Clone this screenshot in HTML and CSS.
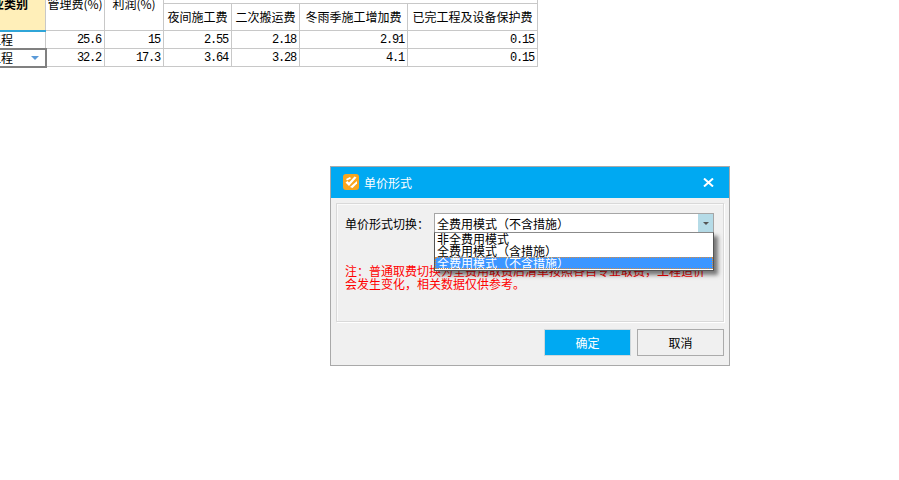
FILE: index.html
```html
<!DOCTYPE html>
<html lang="zh-CN">
  <head>
    <meta charset="UTF-8" />
    <meta name="viewport" content="width=device-width, initial-scale=1.0" />
    <title>单价形式</title>
    <link rel="stylesheet" href="styles.css">
  </head>
  <body>
    <!-- Fee table, scrolled so its top and left edges are cut off -->
    <table class="fee-table">
      <colgroup>
        <col class="col-type" />
        <col class="col-59" />
        <col class="col-59" />
        <col class="col-68" />
        <col class="col-68" />
        <col class="col-108" />
        <col class="col-130" />
      </colgroup>
      <thead>
        <tr class="head-group">
          <th rowspan="2" class="head-type">取费专业类别</th>
          <th rowspan="2" class="head-tall">管理费(%)</th>
          <th rowspan="2" class="head-tall">利润(%)</th>
          <th colspan="4"></th>
        </tr>
        <tr class="head-sub">
          <th>夜间施工费</th>
          <th>二次搬运费</th>
          <th>冬雨季施工增加费</th>
          <th>已完工程及设备保护费</th>
        </tr>
      </thead>
      <tbody>
        <tr>
          <td class="cell-type">建筑工程</td>
          <td class="num">25.6</td>
          <td class="num">15</td>
          <td class="num">2.55</td>
          <td class="num">2.18</td>
          <td class="num">2.91</td>
          <td class="num">0.15</td>
        </tr>
        <tr>
          <td class="cell-type cell-active">安装工程<span class="cell-arrow"></span></td>
          <td class="num">32.2</td>
          <td class="num">17.3</td>
          <td class="num">3.64</td>
          <td class="num">3.28</td>
          <td class="num">4.1</td>
          <td class="num">0.15</td>
        </tr>
      </tbody>
    </table>

    <div class="dialog">
      <div class="dialog-title">
        <svg class="app-icon" width="16" height="16" viewBox="0 0 16 16">
          <rect width="16" height="16" rx="3" fill="#f9a61c" />
          <path d="M2.500 8.500 6 12 13.500 3.500 11.500 2.500 6 8.500 4.500 7Z" fill="#fff" />
          <path d="M7 13 14 7 14 9.500 9.500 14Z" fill="#fff" />
          <path d="M3 5 7 3 8 4.500 4 6.500Z" fill="#fff" />
        </svg>
        <span class="dialog-name">单价形式</span>
        <svg class="close-icon" width="11" height="9" viewBox="0 0 11 9">
          <path d="M1 0.500 10 8.500M10 0.500 1 8.500" stroke="#fff" stroke-width="2" fill="none" />
        </svg>
      </div>

      <div class="dialog-body">
        <div class="group-box">
          <div class="form-row">
            <label class="form-label">单价形式切换：</label>
            <div class="combo">
              <span class="combo-value">全费用模式（不含措施）</span>
              <span class="combo-btn"><span class="combo-arrow"></span></span>
              <ul class="combo-list">
                <li>非全费用模式</li>
                <li>全费用模式（含措施）</li>
                <li class="selected">全费用模式（不含措施）</li>
              </ul>
            </div>
          </div>
          <p class="note">注：普通取费切换为全费用取费后清单按照各自专业取费，工程造价会发生变化，相关数据仅供参考。</p>
        </div>

        <div class="dialog-buttons">
          <button class="btn btn-primary">确定</button>
          <button class="btn">取消</button>
        </div>
      </div>
    </div>
  </body>
</html>
```

FILE: styles.css
```css
html,
body {
  margin: 0;
  height: 100%;
  overflow: hidden;
  background: #fff;
}
body {
  position: relative;
  font-family: "Noto Sans CJK SC", "Liberation Sans", sans-serif;
  font-size: 12px;
  color: #000;
}

/* table */
.fee-table {
  border-collapse: collapse;
  table-layout: fixed;
  width: 597px;
  margin: -21px 0 0 -60px;
}
.col-type { width: 105px; }
.col-59 { width: 59px; }
.col-68 { width: 68px; }
.col-108 { width: 108px; }
.col-130 { width: 130px; }
.fee-table th,
.fee-table td {
  border: 1px solid #c8c8c8;
  padding: 0;
  overflow: hidden;
  white-space: nowrap;
  font-weight: normal;
  line-height: 14px;
}
.head-group th {
  height: 23px;
}
.head-sub th {
  height: 26px;
}
.fee-table .head-tall {
  padding-bottom: 2px;
}
.fee-table .head-type {
  background: #ffefb9;
  border-bottom: 2px solid #2fa5d8;
  font-weight: bold;
  text-align: right;
  padding: 0 17px 2px 0;
}
.fee-table td {
  height: 18px;
  box-sizing: border-box;
}
.fee-table .cell-type {
  position: relative;
  text-align: left;
  padding-left: 24px;
}
.fee-table .cell-active {
  outline: 2px solid #808080;
  outline-offset: -1px;
}
.cell-arrow {
  position: absolute;
  right: 6px;
  top: 7px;
  border-left: 4px solid transparent;
  border-right: 4px solid transparent;
  border-top: 4px solid #5a9ad8;
}
.fee-table .num {
  text-align: right;
  padding-right: 3px;
  font-family: "Liberation Mono", monospace;
  font-size: 12px;
  letter-spacing: -1.2px;
}

/* dialog */
.dialog {
  position: absolute;
  left: 330px;
  top: 166px;
  width: 398px;
  height: 198px;
  display: flex;
  flex-direction: column;
  background: #f0f0f0;
  border: 1px solid #a9a9a9;
}
.dialog-title {
  display: flex;
  align-items: center;
  height: 31px;
  flex: none;
  box-sizing: border-box;
  background: #00a9f2;
  color: #fff;
  padding: 0 15px 1px 12px;
}
.app-icon {
  flex: none;
}
.dialog-name {
  margin-left: 5px;
  flex: 1;
}
.dialog-body {
  flex: 1;
  display: flex;
  flex-direction: column;
  padding: 5px 5px 8px 5px;
}
.group-box {
  height: 119px;
  box-sizing: border-box;
  border: 1px solid #d9d9d9;
  box-shadow: inset 1px 1px 0 #fafafa, 1px 1px 0 #fff;
  padding: 9px 9px 0 8px;
}
.form-row {
  display: flex;
  align-items: center;
}
.form-label {
  width: 89px;
  flex: none;
}
.combo {
  position: relative;
  flex: 1;
  height: 20px;
  display: flex;
  align-items: center;
  box-sizing: border-box;
  background: #fff;
  border: 1px solid #a6a6a6;
  padding-left: 2px;
}
.combo-value {
  flex: 1;
}
.combo-btn {
  width: 15px;
  height: 18px;
  display: flex;
  align-items: center;
  justify-content: center;
  background: #b5dbe7;
}
.combo-arrow {
  border-left: 3px solid transparent;
  border-right: 3px solid transparent;
  border-top: 3px solid #555;
}
.combo-list {
  position: absolute;
  left: -1px;
  right: -1px;
  top: 18px;
  height: 37px;
  margin: 0;
  padding: 0;
  list-style: none;
  background: #fff;
  border: 1px solid #555;
  border-top-color: #8a8a8a;
  box-shadow: 4px 4px 4px rgba(0, 0, 0, 0.5);
  box-sizing: content-box;
}
.combo-list li {
  height: 12px;
  line-height: 12px;
  padding-left: 2px;
}
.combo-list .selected {
  background: #3c96ff;
  color: #fff;
  outline: 1px dotted #d98a3a;
  outline-offset: -1px;
}
.note {
  margin: 31px 0 0 0;
  color: #f00;
  line-height: 13px;
  width: 364px;
}
.dialog-buttons {
  display: flex;
  justify-content: flex-end;
  gap: 6px;
  margin-top: 7px;
}
.btn {
  width: 87px;
  height: 27px;
  padding: 0;
  box-sizing: border-box;
  background: #f0f0f0;
  border: 1px solid #ababab;
  font: inherit;
  color: #000;
}
.btn-primary {
  background: #00a9f2;
  border-color: #cfd8dc;
  color: #fff;
}
```
